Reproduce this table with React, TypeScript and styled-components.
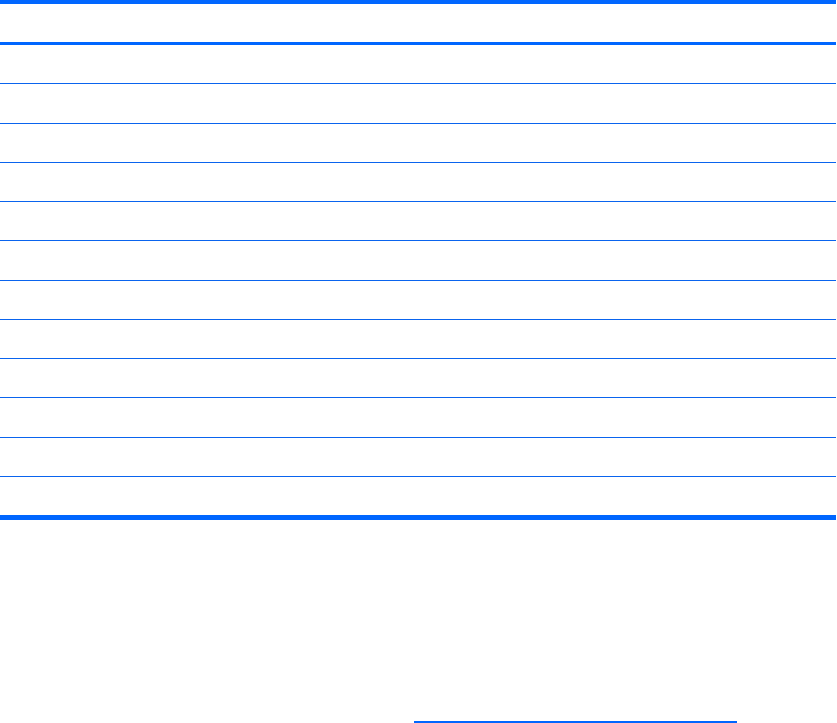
import styled, { createGlobalStyle } from 'styled-components'

const BLUE = '#0066ff'
const RULE = '#0a64ee'

const GlobalStyle = createGlobalStyle`
	html, body {
		margin: 0;
		padding: 0;
		background: #ffffff;
		font-family: "Liberation Sans", Arial, sans-serif;
		font-size: 14px;
		color: #000000;
	}
`

const BODY_ROWS = 12

export default function App() {
	return (
		<Page>
			<GlobalStyle />
			<Table>
				<HeaderRow>
					<Cell />
					<Cell />
				</HeaderRow>
				{Array.from({ length: BODY_ROWS }).map((_, i) => (
					<Row key={i} $last={i === BODY_ROWS - 1}>
						<Cell />
						<Cell />
					</Row>
				))}
			</Table>
			<Footer>
				<LinkLine href="#" aria-label="link">
					<Segment $width={231} />
					<Segment $width={79} />
					<Segment $width={13} />
				</LinkLine>
			</Footer>
		</Page>
	)
}

const Page = styled.main`
	width: 837px;
	height: 723px;
	overflow: hidden;
`

const Table = styled.div`
	width: 836px;
	display: flex;
	flex-direction: column;
	border-top: 4px solid ${BLUE};
	border-bottom: 5px solid ${BLUE};
`

const HeaderRow = styled.div`
	display: grid;
	grid-template-columns: 1fr 1fr;
	height: 38px;
	border-bottom: 3px solid ${BLUE};
`

const Row = styled.div<{ $last?: boolean }>`
	display: grid;
	grid-template-columns: 1fr 1fr;
	height: 38.25px;
	border-bottom: ${({ $last }) => ($last ? 'none' : `1px solid ${RULE}`)};
`

const Cell = styled.div`
	padding: 8px 10px;
`

const Footer = styled.div`
	padding: 201px 0 0 414px;
`

const LinkLine = styled.a`
	display: flex;
	width: 323px;
	text-decoration: none;
`

const Segment = styled.span<{ $width: number }>`
	width: ${({ $width }) => $width}px;
	border-top: 2px solid ${BLUE};
`
